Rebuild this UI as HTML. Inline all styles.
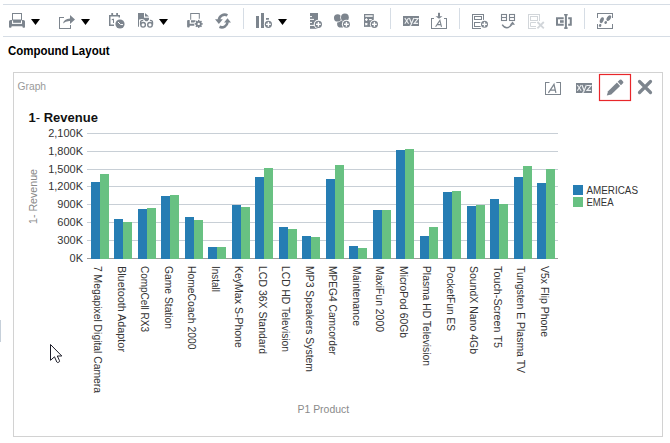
<!DOCTYPE html>
<html><head><meta charset="utf-8">
<style>
html,body{margin:0;padding:0;background:#fff;}
body{width:670px;height:443px;overflow:hidden;position:relative;font-family:"Liberation Sans",sans-serif;}
svg{position:absolute;left:0;top:0;}
text{font-family:"Liberation Sans",sans-serif;}
</style></head><body>
<svg width="670" height="443" viewBox="0 0 670 443">
<!-- toolbar lines -->
<rect x="3" y="4" width="667" height="1" fill="#d6dde5"/>
<rect x="3" y="36" width="667" height="1" fill="#d6dde5"/>
<!-- separators -->
<rect x="243" y="8" width="1" height="21" fill="#d6dde5"/>
<rect x="390" y="8" width="1" height="21" fill="#d6dde5"/>
<rect x="459" y="8" width="1" height="21" fill="#d6dde5"/>
<rect x="584" y="8" width="1" height="21" fill="#d6dde5"/>
<g fill="#7d858e" stroke="none">
<!-- printer -->
<path d="M9,21.6 Q9,20 10.6,20 L23.4,20 Q25,20 25,21.6 L25,27 Q25,27.8 24.2,27.8 L23.2,27.8 Q22.6,27.8 22.5,27 L22.4,26.3 L11.6,26.3 L11.5,27 Q11.4,27.8 10.8,27.8 L9.8,27.8 Q9,27.8 9,27 Z"/>
<rect x="12" y="20" width="10" height="3.9" fill="#fff"/>
<rect x="13.1" y="20" width="7.9" height="2.8"/>
<rect x="12.5" y="13.5" width="9" height="6.5" fill="none" stroke="#7d858e" stroke-width="1"/>
<!-- export -->
<path d="M59,17 L64,17 L64,18 L60,18 L60,28 L70,28 L70,25 L71,25 L71,29 L59,29 Z"/>
<path d="M63,23.5 Q63.8,19 70,18.6 L70,15 L75,19.5 L70,24 L70,21 Q65.5,20.8 63,23.5 Z"/>
<!-- calendar -->
<path d="M109,15 L120,15 L120,17.5 L118.6,17.5 L118.6,16.5 L110.5,16.5 L110.5,24.5 L114,24.5 L114,26 L109,26 Z"/>
<rect x="111.3" y="13" width="1.8" height="2.5"/>
<rect x="116.2" y="13" width="1.8" height="2.5"/>
<path d="M111.7,19.3 L113,18.8 L114,18.8 L114,23 L113,23 L113,20 L111.7,20.3 Z"/>
<circle cx="120" cy="24" r="5.3" fill="#fff"/>
<circle cx="120" cy="24" r="4.6"/>
<path d="M118,22 L120.5,24.5 L123,24.6" fill="none" stroke="#fff" stroke-width="1"/>
<!-- glasses doc -->
<path d="M138,12.9 L144,12.9 L144,17.7 L149,17.7 L149,19.4 L147.5,21.3 L145.5,21.3 L144,19.4 L139,19.4 L139,26.7 L138,26.7 Z"/>
<path d="M145,12.9 L149,16.6 L145,16.6 Z"/>
<g fill="none" stroke="#fff" stroke-width="3">
<circle cx="143.1" cy="24.8" r="2.3"/><circle cx="150" cy="24.8" r="2.3"/>
<path d="M140.6,24.7 L140.6,22.5 Q140.6,20.4 142.6,20.4 L143.2,20.4 M152.5,24.7 L152.5,22.5 Q152.5,20.4 150.5,20.4 L149.9,20.4"/>
</g>
<g fill="none" stroke="#7d858e" stroke-width="1.4">
<circle cx="143.1" cy="24.8" r="2.3"/><circle cx="150" cy="24.8" r="2.3"/>
<path d="M140.6,24.7 L140.6,22.5 Q140.6,20.4 142.6,20.4 L143.2,20.4 M152.5,24.7 L152.5,22.5 Q152.5,20.4 150.5,20.4 L149.9,20.4"/>
</g>
<!-- print setup -->
<path d="M190.2,12.9 L199.8,12.9 L199.8,18.7 L198.8,18.7 L198.8,13.9 L191.2,13.9 L191.2,19.8 L190.2,19.8 Z"/>
<path d="M187.1,21 Q187.1,20 188.1,20 L189.7,20 L189.7,23.7 L194.7,23.7 L194.7,25.8 L189.7,25.8 L189.7,26.5 Q189.7,27.5 188.7,27.5 L188.1,27.5 Q187.1,27.5 187.1,26.5 Z"/>
<path d="M191,20.2 L195.8,20.2 L194.8,22.6 L191,22.6 Z"/>
<circle cx="198.7" cy="23.9" r="4.6" fill="#fff"/>
<circle cx="198.7" cy="23.9" r="3"/>
<g stroke="#7d858e" stroke-width="1.5"><line x1="198.7" y1="19.9" x2="198.7" y2="27.9"/><line x1="194.7" y1="23.9" x2="202.7" y2="23.9"/><line x1="195.9" y1="21.1" x2="201.5" y2="26.7"/><line x1="201.5" y1="21.1" x2="195.9" y2="26.7"/></g>
<circle cx="198.7" cy="23.9" r="1.2" fill="#fff"/>
<!-- refresh -->
<path d="M218.9,19.8 A5.8,5.8 0 0 1 227.4,15.3" fill="none" stroke="#7d858e" stroke-width="2.6"/>
<path d="M215,19.2 L222.8,19.2 L218.9,24 Z"/>
<path d="M227.6,22.2 A5.8,5.8 0 0 1 219.5,26.8" fill="none" stroke="#7d858e" stroke-width="2.6"/>
<path d="M224,22.6 L231,22.6 L227.5,18.2 Z"/>
<!-- bars+ -->
<rect x="256" y="16" width="3" height="12"/>
<rect x="261" y="13" width="3" height="15"/>
<rect x="266" y="18" width="3" height="1.8"/>
<circle cx="268.4" cy="24.3" r="4.5" fill="#fff"/><circle cx="268.4" cy="24.3" r="3.6"/><rect x="266.00" y="23.60" width="4.8" height="1.4" fill="#fff"/><rect x="267.70" y="21.90" width="1.4" height="4.8" fill="#fff"/>
<!-- doc+ -->
<path d="M310,13 L318,13 L318,28.8 L310,28.8 Z"/>
<rect x="310" y="16.1" width="2" height="1" fill="#fff"/>
<rect x="310" y="18.9" width="4" height="1" fill="#fff"/>
<rect x="310" y="21.9" width="2" height="1" fill="#fff"/>
<rect x="310" y="24.9" width="4" height="1" fill="#fff"/>
<circle cx="318.4" cy="24.3" r="4.6" fill="#fff"/><circle cx="318.4" cy="24.3" r="3.6"/><rect x="316.00" y="23.60" width="4.8" height="1.4" fill="#fff"/><rect x="317.70" y="21.90" width="1.4" height="4.8" fill="#fff"/>
<!-- circles+ -->
<circle cx="341" cy="23.7" r="3.9"/>
<circle cx="337.6" cy="17.9" r="4.5" fill="#fff"/>
<circle cx="337.6" cy="17.9" r="3.65"/>
<circle cx="344.9" cy="17.4" r="4.7" fill="#fff"/>
<circle cx="344.9" cy="17.4" r="3.9"/>
<circle cx="346.4" cy="24.3" r="4.5" fill="#fff"/><circle cx="346.4" cy="24.3" r="3.5"/><rect x="344.00" y="23.60" width="4.8" height="1.4" fill="#fff"/><rect x="345.70" y="21.90" width="1.4" height="4.8" fill="#fff"/>
<!-- calc+ -->
<rect x="364" y="14" width="9.8" height="12.9"/>
<rect x="365.2" y="15.3" width="7.5" height="1.5" fill="#fff"/>
<rect x="365.1" y="19" width="2.6" height="1.2" fill="#fff"/>
<rect x="365.8" y="18.3" width="1.2" height="2.6" fill="#fff"/>
<rect x="369.1" y="19" width="2.6" height="1.2" fill="#fff"/>
<path d="M365.3,23.1 L367.3,25.1 M367.3,23.1 L365.3,25.1" stroke="#fff" stroke-width="1.1"/>
<circle cx="374.4" cy="24.3" r="4.5" fill="#fff"/><circle cx="374.4" cy="24.3" r="3.6"/><rect x="372.00" y="23.60" width="4.8" height="1.4" fill="#fff"/><rect x="373.70" y="21.90" width="1.4" height="4.8" fill="#fff"/>
<!-- xyz -->
<rect x="403" y="16" width="16" height="10"/>
<g fill="none" stroke="#eef0f2" stroke-width="1.15">
<path d="M404.8,18 L408.6,23.8 M408.6,18 L404.8,23.8"/>
<path d="M409.4,18 L411.6,23.8 M413.8,18 L411,25 Q410.6,25.6 409.8,25.4"/>
<path d="M414.2,18.5 L418,18.5 L414.2,23.3 L418.1,23.3"/>
</g>
<!-- A import -->
<path d="M431,18 L434,18 L434,19 L432,19 L432,28 L446,28 L446,19 L444,19 L444,18 L447,18 L447,29 L431,29 Z"/>
<rect x="438" y="12.8" width="2" height="4"/>
<path d="M435.5,16.2 L442.5,16.2 L439,18.8 Z"/>
<g fill="none" stroke="#7d858e" stroke-width="1.1">
<path d="M435.6,26.8 L439.9,20.4 L441.5,26.8 M437.3,24.6 L441,24.6"/>
</g>
<!-- layout+ -->
<path d="M472,14 L484,14 L484,20 L483,20 L483,15 L473,15 L473,28 L481,28 L481,29 L472,29 Z"/>
<rect x="474.5" y="16.5" width="7" height="3" fill="none" stroke="#7d858e" stroke-width="1"/>
<rect x="474.5" y="22.5" width="7" height="4" fill="none" stroke="#7d858e" stroke-width="1"/>
<circle cx="484.5" cy="24.3" r="4.5" fill="#fff"/><circle cx="484.5" cy="24.3" r="3.5"/><rect x="482.10" y="23.60" width="4.8" height="1.4" fill="#fff"/><rect x="483.80" y="21.90" width="1.4" height="4.8" fill="#fff"/>
<!-- swap -->
<g fill="none" stroke="#7d858e" stroke-width="1.1">
<rect x="501.5" y="14.5" width="5" height="6"/><line x1="501" y1="17.5" x2="507" y2="17.5"/>
<rect x="509.5" y="14.5" width="5" height="6"/><line x1="509" y1="17.5" x2="515" y2="17.5"/>
<path d="M502.2,24.6 Q506.5,31 511.8,24.6" stroke-width="1.5"/>
</g>
<path d="M509.8,24.8 L512.6,21.6 L515,24.8 Z"/>
<!-- delete disabled -->
<g fill="#d2d6da">
<path d="M528,14 L540,14 L540,21 L539,21 L539,15 L529,15 L529,28 L536,28 L536,29 L528,29 Z"/>
<rect x="530.5" y="16.5" width="7" height="4" fill="none" stroke="#d2d6da" stroke-width="1"/>
<path d="M536,22.5 L530.5,22.5 L530.5,26.5 L536,26.5" fill="none" stroke="#d2d6da" stroke-width="1"/>
<path d="M537.4,22 L543.8,28.4 M543.8,22 L537.4,28.4" stroke="#d2d6da" stroke-width="1.8"/>
</g>
<!-- split -->
<path d="M556,17.2 L563.7,17.2 L563.7,19.2 L558,19.2 L558,23.8 L563.7,23.8 L563.7,25.8 L556,25.8 Z"/>
<rect x="560" y="20.2" width="3.7" height="2.6"/>
<rect x="564.9" y="14" width="2" height="14.8"/>
<rect x="564.1" y="14" width="3.6" height="1.5"/>
<rect x="564.1" y="27.3" width="3.6" height="1.5"/>
<path d="M568.2,17.2 L571.8,17.2 L571.8,25.8 L568.2,25.8 L568.2,23.8 L569.8,23.8 L569.8,19.2 L568.2,19.2 Z"/>
<!-- footprints -->
<path d="M597,18 L597,13 L613,13 L613,18 L612,18 L612,14 L598,14 L598,18 Z"/>
<path d="M597,24 L597,29 L613,29 L613,24 L612,24 L612,28 L598,28 L598,24 Z"/>
<ellipse cx="601.8" cy="20.2" rx="1.8" ry="3.1" transform="rotate(22 601.8 20.2)"/>
<ellipse cx="600.1" cy="25.4" rx="1.3" ry="1.5" transform="rotate(22 600.1 25.4)"/>
<ellipse cx="608.8" cy="18.1" rx="1.8" ry="3.1" transform="rotate(35 608.8 18.1)"/>
<ellipse cx="605.7" cy="22.6" rx="1.3" ry="1.5" transform="rotate(35 605.7 22.6)"/>
</g>
<!-- dropdown triangles -->
<g fill="#000">
<path d="M31,19 L40,19 L35.5,25 Z"/>
<path d="M81,19 L90,19 L85.5,25 Z"/>
<path d="M159,19 L168,19 L163.5,25 Z"/>
<path d="M278,19 L287,19 L282.5,25 Z"/>
</g>

<!-- Title -->
<text x="8" y="55" font-size="12" font-weight="bold" fill="#000" textLength="101.5" lengthAdjust="spacingAndGlyphs">Compound Layout</text>

<!-- container -->
<rect x="13.5" y="72.5" width="649" height="364" fill="none" stroke="#d2d2d2" stroke-width="1"/>
<text x="17.5" y="90" font-size="11" fill="#9a9a9a" textLength="28.6" lengthAdjust="spacingAndGlyphs">Graph</text>
<!-- header icons -->
<g fill="#7d858e">
<path d="M545,82 L549.5,82 L549.5,83 L546,83 L546,94 L560,94 L560,83 L556.3,83 L556.3,82 L561,82 L561,95 L545,95 Z"/>
<g fill="none" stroke="#7d858e" stroke-width="1.25">
<path d="M548.4,92.8 L554,84.4 L555.9,92.8 M550.4,90.1 L555.4,90.1"/>
</g>
<rect x="576" y="83" width="16" height="10"/>
<g fill="none" stroke="#eef0f2" stroke-width="1.15">
<path d="M577.3,85 L581.2,90.8 M581.2,85 L577.3,90.8"/>
<path d="M582,85 L584.2,90.8 M586.4,85 L583.6,92 Q583.2,92.6 582.4,92.4"/>
<path d="M587,85.5 L591,85.5 L587,90.3 L591.1,90.3"/>
</g>
</g>
<rect x="599.5" y="74.5" width="31" height="26" fill="none" stroke="#e8262a" stroke-width="1.2"/>
<g fill="#7d858e" transform="translate(606.8,95.6) rotate(-44)">
<path d="M0,0 L4,-2.3 L16.3,-2.3 L16.3,2.3 L4,2.3 Z"/>
<path d="M17.4,-2.3 L20.3,-2.3 Q21.5,-2.3 21.5,-1.1 L21.5,1.1 Q21.5,2.3 20.3,2.3 L17.4,2.3 Z"/>
</g>
<path d="M639.5,81.5 L650.5,92.5 M650.5,81.5 L639.5,92.5" stroke="#7d858e" stroke-width="3.2" stroke-linecap="round"/>

<!-- chart title -->
<text x="28.5" y="121.7" font-size="13" font-weight="bold" fill="#111">1<tspan font-weight="normal">-</tspan> Revenue</text>

<!-- gridlines -->
<line x1="87" y1="133.5" x2="558" y2="133.5" stroke="#c8cfd6" stroke-width="1"/>
<line x1="87" y1="151.5" x2="558" y2="151.5" stroke="#c8cfd6" stroke-width="1"/>
<line x1="87" y1="169.5" x2="558" y2="169.5" stroke="#c8cfd6" stroke-width="1"/>
<line x1="87" y1="186.5" x2="558" y2="186.5" stroke="#c8cfd6" stroke-width="1"/>
<line x1="87" y1="204.5" x2="558" y2="204.5" stroke="#c8cfd6" stroke-width="1"/>
<line x1="87" y1="222.5" x2="558" y2="222.5" stroke="#c8cfd6" stroke-width="1"/>
<line x1="87" y1="240.5" x2="558" y2="240.5" stroke="#c8cfd6" stroke-width="1"/>
<line x1="87" y1="258.5" x2="558" y2="258.5" stroke="#9c9c9c" stroke-width="1"/>
<!-- bars -->
<rect x="91" y="182" width="9" height="77" fill="#267db3"/>
<rect x="100" y="174" width="9" height="85" fill="#68c182"/>
<rect x="114" y="219" width="9" height="40" fill="#267db3"/>
<rect x="123" y="222" width="9" height="37" fill="#68c182"/>
<rect x="138" y="209" width="9" height="50" fill="#267db3"/>
<rect x="147" y="208" width="9" height="51" fill="#68c182"/>
<rect x="161" y="196" width="9" height="63" fill="#267db3"/>
<rect x="170" y="195" width="9" height="64" fill="#68c182"/>
<rect x="185" y="217" width="9" height="42" fill="#267db3"/>
<rect x="194" y="220" width="9" height="39" fill="#68c182"/>
<rect x="208" y="247" width="9" height="12" fill="#267db3"/>
<rect x="217" y="247" width="9" height="12" fill="#68c182"/>
<rect x="232" y="205" width="9" height="54" fill="#267db3"/>
<rect x="241" y="207" width="9" height="52" fill="#68c182"/>
<rect x="255" y="177" width="9" height="82" fill="#267db3"/>
<rect x="264" y="168" width="9" height="91" fill="#68c182"/>
<rect x="279" y="227" width="9" height="32" fill="#267db3"/>
<rect x="288" y="229" width="9" height="30" fill="#68c182"/>
<rect x="302" y="236" width="9" height="23" fill="#267db3"/>
<rect x="311" y="237" width="9" height="22" fill="#68c182"/>
<rect x="326" y="179" width="9" height="80" fill="#267db3"/>
<rect x="335" y="165" width="9" height="94" fill="#68c182"/>
<rect x="349" y="246" width="9" height="13" fill="#267db3"/>
<rect x="358" y="248" width="9" height="11" fill="#68c182"/>
<rect x="373" y="210" width="9" height="49" fill="#267db3"/>
<rect x="382" y="210" width="9" height="49" fill="#68c182"/>
<rect x="396" y="150" width="9" height="109" fill="#267db3"/>
<rect x="405" y="149" width="9" height="110" fill="#68c182"/>
<rect x="420" y="236" width="9" height="23" fill="#267db3"/>
<rect x="429" y="227" width="9" height="32" fill="#68c182"/>
<rect x="443" y="192" width="9" height="67" fill="#267db3"/>
<rect x="452" y="191" width="9" height="68" fill="#68c182"/>
<rect x="467" y="206" width="9" height="53" fill="#267db3"/>
<rect x="476" y="205" width="9" height="54" fill="#68c182"/>
<rect x="490" y="199" width="9" height="60" fill="#267db3"/>
<rect x="499" y="204" width="9" height="55" fill="#68c182"/>
<rect x="514" y="177" width="9" height="82" fill="#267db3"/>
<rect x="523" y="166" width="9" height="93" fill="#68c182"/>
<rect x="537" y="183" width="9" height="76" fill="#267db3"/>
<rect x="546" y="169" width="9" height="90" fill="#68c182"/>
<!-- y labels -->
<g font-size="11" fill="#333">
<text x="83" y="137.0" text-anchor="end">2,100K</text>
<text x="83" y="155.0" text-anchor="end">1,800K</text>
<text x="83" y="173.0" text-anchor="end">1,500K</text>
<text x="83" y="190.0" text-anchor="end">1,200K</text>
<text x="83" y="208.0" text-anchor="end">900K</text>
<text x="83" y="226.0" text-anchor="end">600K</text>
<text x="83" y="244.0" text-anchor="end">300K</text>
<text x="83" y="262.0" text-anchor="end">0K</text>
</g>
<text transform="translate(36.5,224) rotate(-90)" font-size="11" fill="#888" textLength="55" lengthAdjust="spacingAndGlyphs">1- Revenue</text>
<!-- x labels -->
<g font-size="11" fill="#333">
<text transform="translate(94.0,266) rotate(90)" textLength="127" lengthAdjust="spacingAndGlyphs">7 Megapixel Digital Camera</text>
<text transform="translate(117.5,266) rotate(90)" textLength="86" lengthAdjust="spacingAndGlyphs">Bluetooth Adaptor</text>
<text transform="translate(141.0,266) rotate(90)" textLength="66" lengthAdjust="spacingAndGlyphs">CompCell RX3</text>
<text transform="translate(164.5,266) rotate(90)" textLength="63" lengthAdjust="spacingAndGlyphs">Game Station</text>
<text transform="translate(188.0,266) rotate(90)" textLength="83.4" lengthAdjust="spacingAndGlyphs">HomeCoach 2000</text>
<text transform="translate(211.5,266) rotate(90)" textLength="26" lengthAdjust="spacingAndGlyphs">Install</text>
<text transform="translate(235.0,266) rotate(90)" textLength="81.8" lengthAdjust="spacingAndGlyphs">KeyMax S-Phone</text>
<text transform="translate(258.5,266) rotate(90)" textLength="88" lengthAdjust="spacingAndGlyphs">LCD 36X Standard</text>
<text transform="translate(282.0,266) rotate(90)" textLength="86" lengthAdjust="spacingAndGlyphs">LCD HD Television</text>
<text transform="translate(305.5,266) rotate(90)" textLength="106" lengthAdjust="spacingAndGlyphs">MP3 Speakers System</text>
<text transform="translate(329.0,266) rotate(90)" textLength="89" lengthAdjust="spacingAndGlyphs">MPEG4 Camcorder</text>
<text transform="translate(352.5,266) rotate(90)" textLength="60" lengthAdjust="spacingAndGlyphs">Maintenance</text>
<text transform="translate(376.0,266) rotate(90)" textLength="66" lengthAdjust="spacingAndGlyphs">MaxiFun 2000</text>
<text transform="translate(399.5,266) rotate(90)" textLength="72" lengthAdjust="spacingAndGlyphs">MicroPod 60Gb</text>
<text transform="translate(423.0,266) rotate(90)" textLength="100" lengthAdjust="spacingAndGlyphs">Plasma HD Television</text>
<text transform="translate(446.5,266) rotate(90)" textLength="65" lengthAdjust="spacingAndGlyphs">PocketFun ES</text>
<text transform="translate(470.0,266) rotate(90)" textLength="88" lengthAdjust="spacingAndGlyphs">SoundX Nano 4Gb</text>
<text transform="translate(493.5,266) rotate(90)" textLength="82" lengthAdjust="spacingAndGlyphs">Touch-Screen T5</text>
<text transform="translate(517.0,266) rotate(90)" textLength="107" lengthAdjust="spacingAndGlyphs">Tungsten E Plasma TV</text>
<text transform="translate(540.5,266) rotate(90)" textLength="71" lengthAdjust="spacingAndGlyphs">V5x Flip Phone</text>
</g>
<!-- legend -->
<rect x="573" y="185" width="10" height="10" fill="#267db3"/>
<rect x="573" y="197" width="10" height="10" fill="#68c182"/>
<text x="586.5" y="194" font-size="10" fill="#333" textLength="51.5" lengthAdjust="spacingAndGlyphs">AMERICAS</text>
<text x="586.5" y="205.8" font-size="10" fill="#333" textLength="27" lengthAdjust="spacingAndGlyphs">EMEA</text>
<text x="297.5" y="413" font-size="11" fill="#8a8a8a" textLength="51.6" lengthAdjust="spacingAndGlyphs">P1 Product</text>

<!-- left side bar -->
<rect x="0" y="320" width="1" height="22" fill="#c6d0da"/>
<!-- cursor -->
<path d="M50.5,344.5 L50.5,360.3 L54.5,356.8 L56.8,362 Q57.3,362.8 58.2,362.4 L59.2,361.9 Q59.8,361.4 59.5,360.7 L57.3,356 L61.8,356 Z" fill="#fff" stroke="#1c1c28" stroke-width="1" stroke-linejoin="miter"/>
</svg>
</body></html>
